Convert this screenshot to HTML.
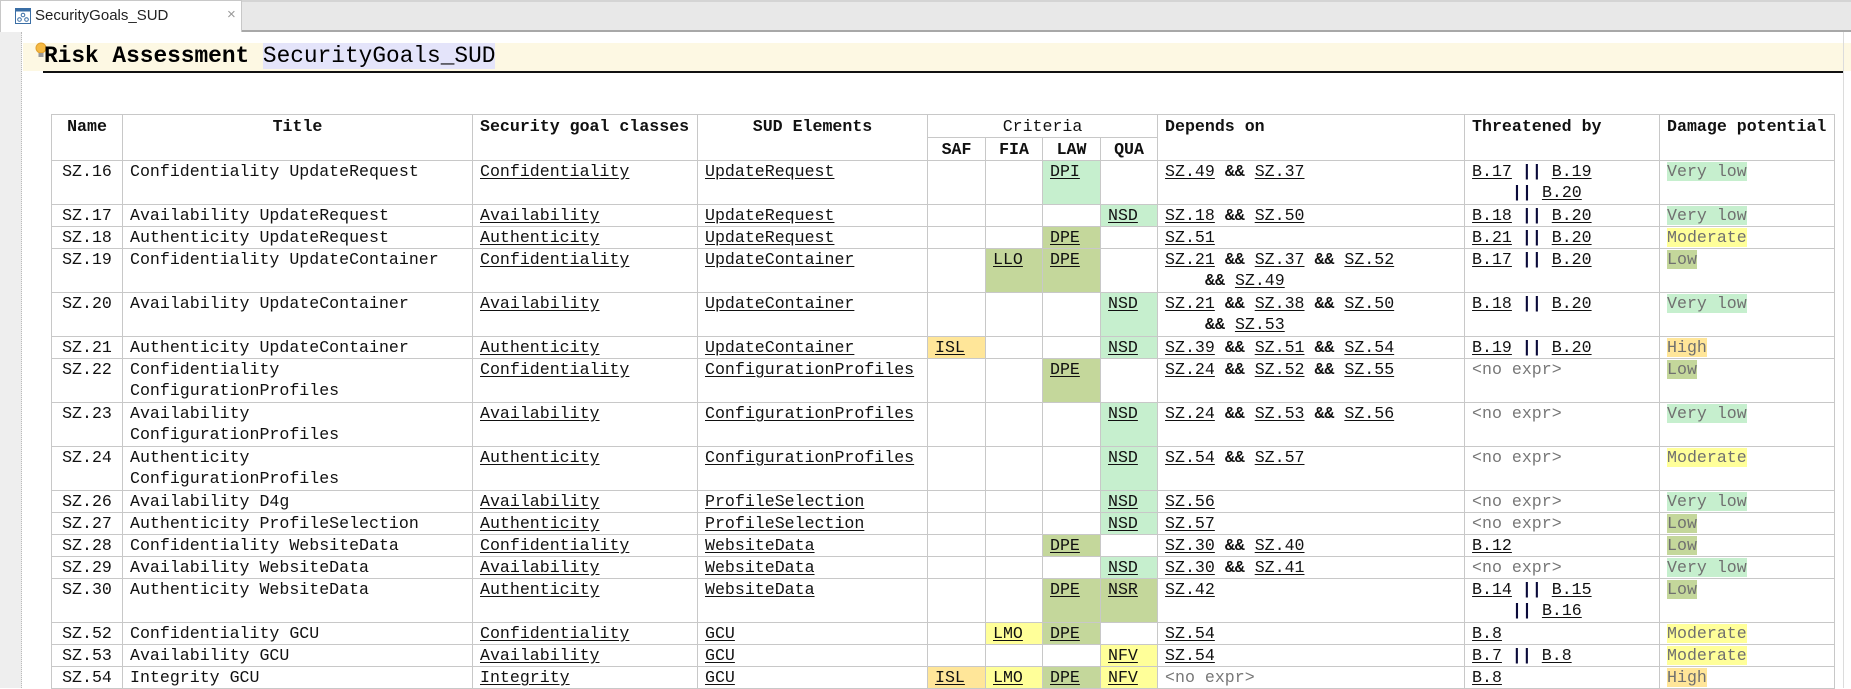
<!DOCTYPE html>
<html><head><meta charset="utf-8"><style>
*{margin:0;padding:0;box-sizing:border-box}
body{width:1851px;height:688px;overflow:hidden;background:#fff;position:relative;font-family:"Liberation Mono",monospace;font-size:16.6px;color:#111}
.tabbar{position:absolute;left:0;top:0;width:1851px;height:32px;background:#e8e8e8;border-top:2px solid #d4d4d4;border-bottom:2px solid #a8a8a8}
.tab{position:absolute;left:0;top:-2px;width:242px;height:32px;background:#fff;border:1px solid #c8c8c8;border-bottom:none;font-family:"Liberation Sans",sans-serif;font-size:15px;color:#222}
.tab span{position:absolute;left:34px;top:6px}
.tab .x{left:226px;top:5px;color:#999;font-size:15px}
.gutter{position:absolute;left:0;top:32px;width:22px;height:656px;background:#eeeeee;border-right:1px dotted #bbb}
.band{position:absolute;left:23px;top:43px;width:1828px;height:28px;background:#fdf8e3}
.rline{position:absolute;left:1843px;top:32px;width:1px;height:656px;background:#dcdcdc}
.h1{position:absolute;left:44px;top:40px;font-size:22.8px;line-height:32px;font-weight:bold;color:#000;white-space:pre}
.h1 .n{font-weight:normal;background:#e4e4fa}
.uline{position:absolute;left:43px;top:71px;width:1800px;height:2px;background:#111}
table{position:absolute;left:51px;top:114px;border-collapse:collapse;table-layout:fixed;width:1783px}
td,th{border:1px solid #c8c8c8;vertical-align:top;line-height:21px;padding:1px 7px 0;white-space:nowrap;overflow:hidden;text-align:left}
td{padding-top:0}
th{font-weight:bold}
.c{text-align:center}
td.n{text-align:center;padding:0 2px}
u{text-decoration:underline;text-underline-offset:2px}
b.p{color:#0a0a3a}
.g{background:#c6efce}.o{background:#c4d79b}.y{background:#ffff99}.or{background:#ffe699}
.d{color:#707070}
.ne{color:#777}
.i{padding-left:40px;display:inline-block}
tr.s td{height:21.7px}
tr.t td{height:44px}
</style></head><body>
<div class="tabbar"><div class="tab">
<svg style="position:absolute;left:14px;top:7px" width="16" height="16" viewBox="0 0 16 16"><rect x="0.5" y="0.5" width="15" height="15" fill="#fff" stroke="#3a6ea5"/><rect x="0.5" y="0.5" width="15" height="3" fill="#3a6ea5"/><circle cx="8" cy="7" r="1.8" fill="none" stroke="#3a6ea5"/><circle cx="4.5" cy="11.5" r="1.8" fill="none" stroke="#3a6ea5"/><circle cx="11.5" cy="11.5" r="1.8" fill="none" stroke="#3a6ea5"/></svg>
<span>SecurityGoals_SUD</span><span class="x">×</span></div></div>
<div class="gutter"></div>
<div class="band"></div>
<div class="rline"></div>
<svg style="position:absolute;left:35px;top:42px" width="12" height="17" viewBox="0 0 12 17"><circle cx="6" cy="6" r="5" fill="#f5b942" stroke="#e0a030"/><rect x="3.5" y="11" width="5" height="4" fill="#999"/></svg>
<div class="h1">Risk Assessment <span class="n">SecurityGoals_SUD</span></div>
<div class="uline"></div>
<table>
<colgroup><col style="width:71px"><col style="width:350px"><col style="width:225px"><col style="width:230px"><col style="width:58px"><col style="width:57px"><col style="width:58px"><col style="width:57px"><col style="width:307px"><col style="width:195px"><col style="width:175px"></colgroup>
<tr style="height:23px"><th rowspan="2" class="c">Name</th><th rowspan="2" class="c">Title</th><th rowspan="2">Security goal classes</th><th rowspan="2" class="c">SUD Elements</th><th colspan="4" class="c" style="font-weight:normal">Criteria</th><th rowspan="2">Depends on</th><th rowspan="2">Threatened by</th><th rowspan="2">Damage potential</th></tr>
<tr style="height:23px"><th class="c">SAF</th><th class="c">FIA</th><th class="c">LAW</th><th class="c">QUA</th></tr>
<tr class="t"><td class="n">SZ.16</td><td>Confidentiality UpdateRequest</td><td><u>Confidentiality</u></td><td><u>UpdateRequest</u></td><td></td><td></td><td class="g"><u>DPI</u></td><td></td><td><u>SZ.49</u> <b>&amp;&amp;</b> <u>SZ.37</u></td><td><u>B.17</u> <b class="p">||</b> <u>B.19</u><br><span class="i"><b class="p">||</b> <u>B.20</u></span></td><td><span class="g d">Very low</span></td></tr>
<tr class="s"><td class="n">SZ.17</td><td>Availability UpdateRequest</td><td><u>Availability</u></td><td><u>UpdateRequest</u></td><td></td><td></td><td></td><td class="g"><u>NSD</u></td><td><u>SZ.18</u> <b>&amp;&amp;</b> <u>SZ.50</u></td><td><u>B.18</u> <b class="p">||</b> <u>B.20</u></td><td><span class="g d">Very low</span></td></tr>
<tr class="s"><td class="n">SZ.18</td><td>Authenticity UpdateRequest</td><td><u>Authenticity</u></td><td><u>UpdateRequest</u></td><td></td><td></td><td class="o"><u>DPE</u></td><td></td><td><u>SZ.51</u></td><td><u>B.21</u> <b class="p">||</b> <u>B.20</u></td><td><span class="y d">Moderate</span></td></tr>
<tr class="t"><td class="n">SZ.19</td><td>Confidentiality UpdateContainer</td><td><u>Confidentiality</u></td><td><u>UpdateContainer</u></td><td></td><td class="o"><u>LLO</u></td><td class="o"><u>DPE</u></td><td></td><td><u>SZ.21</u> <b>&amp;&amp;</b> <u>SZ.37</u> <b>&amp;&amp;</b> <u>SZ.52</u><br><span class="i"><b>&amp;&amp;</b> <u>SZ.49</u></span></td><td><u>B.17</u> <b class="p">||</b> <u>B.20</u></td><td><span class="o d">Low</span></td></tr>
<tr class="t"><td class="n">SZ.20</td><td>Availability UpdateContainer</td><td><u>Availability</u></td><td><u>UpdateContainer</u></td><td></td><td></td><td></td><td class="g"><u>NSD</u></td><td><u>SZ.21</u> <b>&amp;&amp;</b> <u>SZ.38</u> <b>&amp;&amp;</b> <u>SZ.50</u><br><span class="i"><b>&amp;&amp;</b> <u>SZ.53</u></span></td><td><u>B.18</u> <b class="p">||</b> <u>B.20</u></td><td><span class="g d">Very low</span></td></tr>
<tr class="s"><td class="n">SZ.21</td><td>Authenticity UpdateContainer</td><td><u>Authenticity</u></td><td><u>UpdateContainer</u></td><td class="or"><u>ISL</u></td><td></td><td></td><td class="g"><u>NSD</u></td><td><u>SZ.39</u> <b>&amp;&amp;</b> <u>SZ.51</u> <b>&amp;&amp;</b> <u>SZ.54</u></td><td><u>B.19</u> <b class="p">||</b> <u>B.20</u></td><td><span class="or d">High</span></td></tr>
<tr class="t"><td class="n">SZ.22</td><td>Confidentiality<br>ConfigurationProfiles</td><td><u>Confidentiality</u></td><td><u>ConfigurationProfiles</u></td><td></td><td></td><td class="o"><u>DPE</u></td><td></td><td><u>SZ.24</u> <b>&amp;&amp;</b> <u>SZ.52</u> <b>&amp;&amp;</b> <u>SZ.55</u></td><td class="ne">&lt;no expr&gt;</td><td><span class="o d">Low</span></td></tr>
<tr class="t"><td class="n">SZ.23</td><td>Availability<br>ConfigurationProfiles</td><td><u>Availability</u></td><td><u>ConfigurationProfiles</u></td><td></td><td></td><td></td><td class="g"><u>NSD</u></td><td><u>SZ.24</u> <b>&amp;&amp;</b> <u>SZ.53</u> <b>&amp;&amp;</b> <u>SZ.56</u></td><td class="ne">&lt;no expr&gt;</td><td><span class="g d">Very low</span></td></tr>
<tr class="t"><td class="n">SZ.24</td><td>Authenticity<br>ConfigurationProfiles</td><td><u>Authenticity</u></td><td><u>ConfigurationProfiles</u></td><td></td><td></td><td></td><td class="g"><u>NSD</u></td><td><u>SZ.54</u> <b>&amp;&amp;</b> <u>SZ.57</u></td><td class="ne">&lt;no expr&gt;</td><td><span class="y d">Moderate</span></td></tr>
<tr class="s"><td class="n">SZ.26</td><td>Availability D4g</td><td><u>Availability</u></td><td><u>ProfileSelection</u></td><td></td><td></td><td></td><td class="g"><u>NSD</u></td><td><u>SZ.56</u></td><td class="ne">&lt;no expr&gt;</td><td><span class="g d">Very low</span></td></tr>
<tr class="s"><td class="n">SZ.27</td><td>Authenticity ProfileSelection</td><td><u>Authenticity</u></td><td><u>ProfileSelection</u></td><td></td><td></td><td></td><td class="g"><u>NSD</u></td><td><u>SZ.57</u></td><td class="ne">&lt;no expr&gt;</td><td><span class="o d">Low</span></td></tr>
<tr class="s"><td class="n">SZ.28</td><td>Confidentiality WebsiteData</td><td><u>Confidentiality</u></td><td><u>WebsiteData</u></td><td></td><td></td><td class="o"><u>DPE</u></td><td></td><td><u>SZ.30</u> <b>&amp;&amp;</b> <u>SZ.40</u></td><td><u>B.12</u></td><td><span class="o d">Low</span></td></tr>
<tr class="s"><td class="n">SZ.29</td><td>Availability WebsiteData</td><td><u>Availability</u></td><td><u>WebsiteData</u></td><td></td><td></td><td></td><td class="g"><u>NSD</u></td><td><u>SZ.30</u> <b>&amp;&amp;</b> <u>SZ.41</u></td><td class="ne">&lt;no expr&gt;</td><td><span class="g d">Very low</span></td></tr>
<tr class="t"><td class="n">SZ.30</td><td>Authenticity WebsiteData</td><td><u>Authenticity</u></td><td><u>WebsiteData</u></td><td></td><td></td><td class="o"><u>DPE</u></td><td class="o"><u>NSR</u></td><td><u>SZ.42</u></td><td><u>B.14</u> <b class="p">||</b> <u>B.15</u><br><span class="i"><b class="p">||</b> <u>B.16</u></span></td><td><span class="o d">Low</span></td></tr>
<tr class="s"><td class="n">SZ.52</td><td>Confidentiality GCU</td><td><u>Confidentiality</u></td><td><u>GCU</u></td><td></td><td class="y"><u>LMO</u></td><td class="o"><u>DPE</u></td><td></td><td><u>SZ.54</u></td><td><u>B.8</u></td><td><span class="y d">Moderate</span></td></tr>
<tr class="s"><td class="n">SZ.53</td><td>Availability GCU</td><td><u>Availability</u></td><td><u>GCU</u></td><td></td><td></td><td></td><td class="y"><u>NFV</u></td><td><u>SZ.54</u></td><td><u>B.7</u> <b class="p">||</b> <u>B.8</u></td><td><span class="y d">Moderate</span></td></tr>
<tr class="s"><td class="n">SZ.54</td><td>Integrity GCU</td><td><u>Integrity</u></td><td><u>GCU</u></td><td class="or"><u>ISL</u></td><td class="y"><u>LMO</u></td><td class="o"><u>DPE</u></td><td class="y"><u>NFV</u></td><td class="ne">&lt;no expr&gt;</td><td><u>B.8</u></td><td><span class="or d">High</span></td></tr>
</table>
</body></html>
